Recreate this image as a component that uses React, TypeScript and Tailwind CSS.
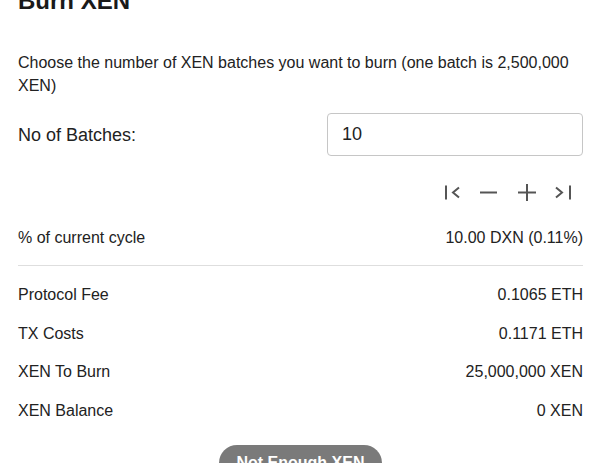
import React, { useState } from 'react';

const rows = [
  { label: 'Protocol Fee', value: '0.1065 ETH' },
  { label: 'TX Costs', value: '0.1171 ETH' },
  { label: 'XEN To Burn', value: '25,000,000 XEN' },
  { label: 'XEN Balance', value: '0 XEN' },
];

const IconButton: React.FC<{ children: React.ReactNode; label: string }> = ({ children, label }) => (
  <button aria-label={label} className="w-[38px] h-[24px] flex items-center justify-center text-[#555]">
    <svg width="24" height="24" viewBox="0 0 24 24" fill="none" stroke="currentColor" strokeWidth="2">
      {children}
    </svg>
  </button>
);

export default function App() {
  const [batches, setBatches] = useState('10');

  return (
    <div className="w-[600px] h-[463px] overflow-hidden bg-white text-[#222] font-['Liberation_Sans',Arial,sans-serif]">
      <div className="pl-[18px] pr-[17px]">
        <h2 className="text-[24px] leading-[24px] font-bold mt-[-11px] text-[#1a1a1a]">Burn XEN</h2>

        <p className="mt-[38px] text-[16px] leading-[23px]">
          Choose the number of XEN batches you want to burn (one batch is 2,500,000 XEN)
        </p>

        <div className="mt-[16px] flex items-center justify-between">
          <label className="text-[18px] leading-[24px]">No of Batches:</label>
          <input
            value={batches}
            onChange={(e) => setBatches(e.target.value)}
            className="w-[256px] h-[43px] border border-[#c6c6c6] rounded-[4px] px-[14px] text-[18px] text-[#222] outline-none"
          />
        </div>

        <div className="mt-[24px] flex justify-end">
          <IconButton label="first">
            <path d="M8 5.5v14" />
            <path d="M21 7.5l-6 5 6 5" />
          </IconButton>
          <IconButton label="minus">
            <path d="M4 12.5h17" />
          </IconButton>
          <IconButton label="plus">
            <path d="M4 12.5h18" />
            <path d="M13 4v17" />
          </IconButton>
          <IconButton label="last">
            <path d="M4 7.5l6 5-6 5" />
            <path d="M18 5.5v14" />
          </IconButton>
        </div>

        <div className="mt-[22px] flex justify-between text-[16px] leading-[24px]">
          <span>% of current cycle</span>
          <span>10.00 DXN (0.11%)</span>
        </div>

        <div className="mt-[15px] border-t border-[#dedede]" />

        <div className="mt-[17px] flex flex-col gap-[14.5px] text-[16px] leading-[24px]">
          {rows.map((r) => (
            <div key={r.label} className="flex justify-between">
              <span>{r.label}</span>
              <span>{r.value}</span>
            </div>
          ))}
        </div>

        <div className="mt-[22px] flex justify-center">
          <button className="rounded-full bg-[#7a7a7a] text-white font-bold text-[16px] leading-[24px] px-[18px] pt-[6px] pb-[6px]">
            Not Enough XEN
          </button>
        </div>
      </div>
    </div>
  );
}
